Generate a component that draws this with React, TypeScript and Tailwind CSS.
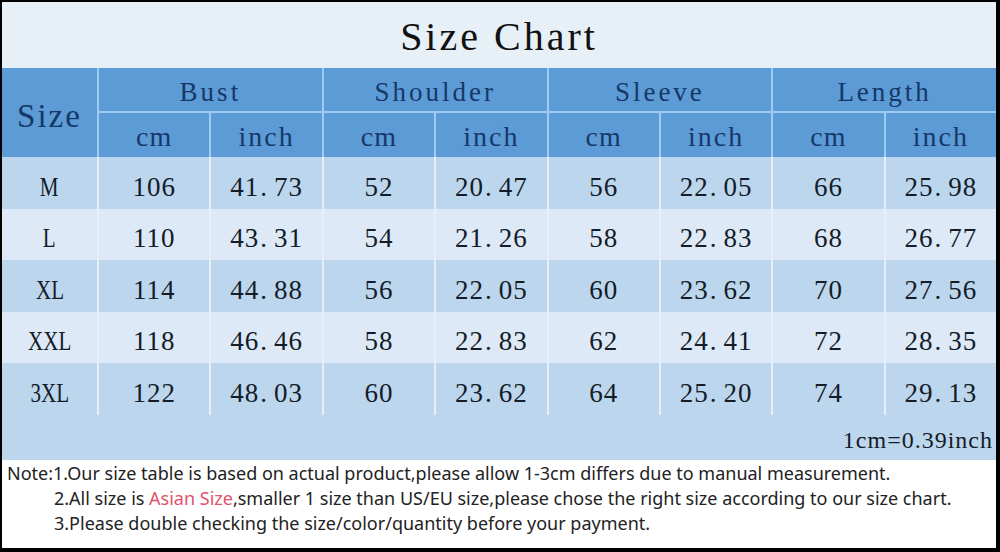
import React from "react";

type Row = { size: string; values: string[] };

const rows: Row[] = [
  { size: "M", values: ["106", "41.73", "52", "20.47", "56", "22.05", "66", "25.98"] },
  { size: "L", values: ["110", "43.31", "54", "21.26", "58", "22.83", "68", "26.77"] },
  { size: "XL", values: ["114", "44.88", "56", "22.05", "60", "23.62", "70", "27.56"] },
  { size: "XXL", values: ["118", "46.46", "58", "22.83", "62", "24.41", "72", "28.35"] },
  { size: "3XL", values: ["122", "48.03", "60", "23.62", "64", "25.20", "74", "29.13"] },
];

const groups = ["Bust", "Shoulder", "Sleeve", "Length"];

const serif = "font-['Liberation_Serif','DejaVu_Serif',serif]";

function Num({ value }: { value: string }) {
  const [whole, frac] = value.split(".");
  if (frac === undefined) return <span className="tracking-[1px]">{whole}</span>;
  return (
    <span className="tracking-[1px]">
      {whole}
      <span className="mr-[6px] ml-[1px]">.</span>
      {frac}
    </span>
  );
}

export default function App() {
  return (
    <div className="h-[552px] w-[1000px] bg-black pt-[2px] pr-[4px] pb-[4px] pl-[2px]">
      <div className="flex h-full w-full flex-col bg-white">
        <div className="flex h-[66px] items-center justify-center bg-[#e7eff7] pt-[4px]">
          <h1 className={`${serif} text-[40px] leading-none tracking-[3px] text-[#111]`}>Size Chart</h1>
        </div>

        <div className="grid grid-cols-[95px_repeat(8,1fr)] grid-rows-[43px_44px] gap-[2px] bg-[#9ecbf1]">
          <div className={`${serif} row-span-2 flex items-center justify-center bg-[#5c9bd6] pt-[8px] text-[33px] tracking-[2px] text-[#163868]`}>
            Size
          </div>
          {groups.map((g) => (
            <div
              key={g}
              className={`${serif} col-span-2 flex items-center justify-center bg-[#5c9bd6] pt-[6px] text-[27px] tracking-[3px] text-[#163868]`}
            >
              {g}
            </div>
          ))}
          {groups.map((g) => (
            <React.Fragment key={g + "u"}>
              <div className={`${serif} flex items-center justify-center bg-[#5c9bd6] pt-[4px] text-[28px] tracking-[1px] text-[#163868]`}>
                cm
              </div>
              <div className={`${serif} flex items-center justify-center bg-[#5c9bd6] pt-[4px] text-[28px] tracking-[2px] text-[#163868]`}>
                inch
              </div>
            </React.Fragment>
          ))}
        </div>

        <div className="flex flex-col">
          {rows.map((r, i) => {
            const bg = i % 2 === 0 ? "bg-[#bcd6ee]" : "bg-[#dde9f6]";
            return (
              <div key={r.size} className="grid h-[51.6px] grid-cols-[95px_repeat(8,1fr)] gap-x-[2px] bg-[#e6eff8]">
                <div className={`${serif} ${bg} flex items-center justify-center pt-[8px] text-[27px] text-[#141c28]`}>
                  <span className="inline-block scale-x-[0.78]">{r.size}</span>
                </div>
                {r.values.map((v, j) => (
                  <div
                    key={j}
                    className={`${serif} ${bg} flex items-center justify-center pt-[8px] text-[27px] text-[#141c28]`}
                  >
                    <Num value={v} />
                  </div>
                ))}
              </div>
            );
          })}
        </div>

        <div className={`${serif} flex h-[45px] items-center justify-end bg-[#bcd6ee] pr-[3px] pt-[6px] text-[24px] tracking-[1px] text-[#141c28]`}>
          1cm=0.39inch
        </div>

        <div className="flex flex-1 flex-col pt-[1px] pl-[5px] font-['Noto_Sans','Open_Sans',sans-serif] text-[18px] leading-[25px] text-[#222]">
          <p>Note:1.Our size table is based on actual product,please allow 1-3cm differs due to manual measurement.</p>
          <p className="pl-[47px]">
            2.All size is <span className="text-[#e2526a]">Asian Size</span>,smaller 1 size than US/EU size,please chose the right size according to our size chart.
          </p>
          <p className="pl-[47px]">3.Please double checking the size/color/quantity before your payment.</p>
        </div>
      </div>
    </div>
  );
}
